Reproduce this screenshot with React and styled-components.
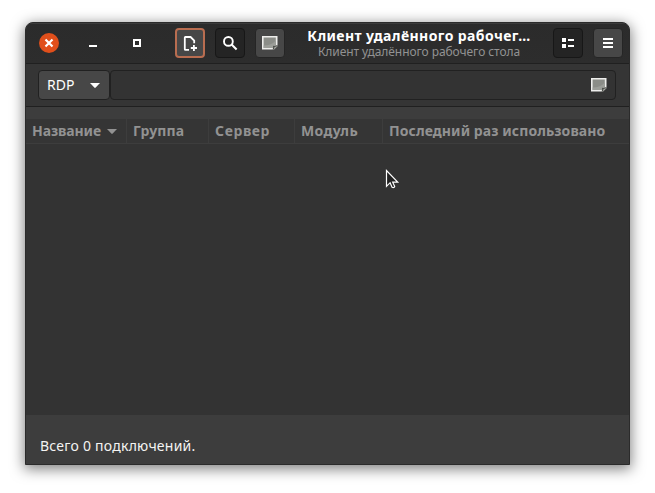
import React from "react";
import styled, { createGlobalStyle } from "styled-components";

const GlobalStyle = createGlobalStyle`
  * { box-sizing: border-box; }
  body { margin: 0; background: #fff; overflow: hidden; }
`;

const Desktop = styled.main`
  width: 655px;
  height: 493px;
  padding: 22px 25px 28px;
  background: #fff;
  font-family: "Noto Sans", sans-serif;
  font-size: 14px;
  color: #f4f4f2;
`;

const Window = styled.section`
  width: 605px;
  height: 443px;
  display: flex;
  flex-direction: column;
  border: 1px solid #2b2b2b;
  border-radius: 8px 8px 0 0;
  overflow: hidden;
  background: #3d3d3d;
  box-shadow: 0 3px 14px 1px rgba(0, 0, 0, 0.5);
`;

const HeaderBar = styled.header`
  height: 41px;
  flex: none;
  display: flex;
  align-items: center;
  padding: 0 6px 0 13px;
  background: linear-gradient(#2b2b2b, #2d2d2d);
  border-bottom: 1px solid #202020;
  box-shadow: inset 0 1px #3c3c3c;
`;

const WindowControls = styled.div`
  display: flex;
  gap: 24px;
  width: 136px;
`;

const Control = styled.button`
  width: 20px;
  height: 20px;
  padding: 0;
  border: 0;
  border-radius: 50%;
  background: ${(p) => (p.$close ? "#e04f1b" : "transparent")};
  svg { display: block; }
`;

const Actions = styled.div`
  display: flex;
  gap: 10px;
`;

const tones = {
  focus: "background:#474747;border:2px solid #b96d50;",
  flat: "background:#242424;border:1px solid #171717;",
  raised: "background:#474747;border:1px solid #252525;",
};

const IconButton = styled.button`
  width: 30px;
  height: 30px;
  padding: 0;
  display: flex;
  align-items: center;
  justify-content: center;
  border-radius: 4px;
  ${(p) => tones[p.$tone]}
  svg { display: block; flex: none; }
`;

const Titles = styled.div`
  flex: 1;
  display: flex;
  flex-direction: column;
  align-items: center;
  white-space: nowrap;
`;

const Title = styled.h1`
  margin: 0;
  font-size: 14px;
  line-height: 17px;
  font-weight: 700;
  letter-spacing: 0.4px;
  color: #fff;
`;

const Subtitle = styled.div`
  font-size: 12px;
  line-height: 15px;
  letter-spacing: -0.07px;
  color: #929292;
`;

const SearchBar = styled.div`
  height: 43px;
  flex: none;
  display: flex;
  padding: 6px 13px 6px 12px;
  background: #353535;
  border-bottom: 1px solid #202020;
`;

const Protocol = styled.button`
  width: 72px;
  height: 30px;
  padding: 0 9px 0 8px;
  display: flex;
  align-items: center;
  justify-content: space-between;
  border: 1px solid #212121;
  border-radius: 4px;
  background: #474747;
  color: #fff;
  font: inherit;
  font-size: 14px;
  span { padding-bottom: 2px; }
`;

const Entry = styled.div`
  flex: 1;
  height: 30px;
  display: flex;
  align-items: center;
  justify-content: flex-end;
  padding-right: 8px;
  border: 1px solid #212121;
  border-radius: 4px;
  background: #333;
`;

const List = styled.div`
  flex: none;
  height: 296px;
  margin-top: 12px;
  background: #333;
`;

const ListHeader = styled.div`
  height: 25px;
  display: grid;
  grid-template-columns: 101px 82px 86px 88px 1fr;
  border-bottom: 1px solid #3d3d3d;
  background: #353535;
`;

const Column = styled.div`
  display: flex;
  align-items: center;
  gap: 6px;
  padding-left: 6px;
  border-right: ${(p) => (p.$last ? "0" : "1px solid #3d3d3d")};
  color: #929292;
  font-weight: 700;
  line-height: 24px;
  white-space: nowrap;
  span { letter-spacing: ${(p) => p.$spacing}px; }
  svg { flex: none; }
`;

const Status = styled.footer`
  flex: 1;
  padding: 21px 14px 0;
  line-height: 20px;
  letter-spacing: 0.24px;
`;

const Pointer = styled.svg`
  position: absolute;
  left: 385px;
  top: 169px;
`;

const Arrow = ({ color }) => (
  <svg width="10" height="5" viewBox="0 0 10 5"><path d="M0 0h10L5.7 4.6q-.7.7-1.4 0z" fill={color} /></svg>
);

const Note = () => (
  <svg width="16" height="14" viewBox="0 0 16 14">
    <path d="M0 0h15.5v10L12 13.5H0z" fill="#eeeeec" />
    <path d="M1.6 1.6h12.2v7.6l-2.6 2.7H1.6z" fill="#8b8d88" />
    <path d="M1.6 9.5q8 0 12.2-5v4.7l-2.6 2.7H1.6z" fill="#9c9e99" />
    <path d="M10.6 13.5q.9-1.7.4-3.7 2.2.6 4.5-1.1v1.5L12 13.5z" fill="#4c4e4a" />
    <path d="M11.8 13.4l.8-2.3 3-1z" fill="#b4b6b0" />
  </svg>
);

const columns = [
  { label: "Название", sort: true, spacing: -0.1 },
  { label: "Группа", spacing: 0.12 },
  { label: "Сервер", spacing: 0.6 },
  { label: "Модуль", spacing: 0.35 },
  { label: "Последний раз использовано", spacing: 0.08 },
];

export default function App() {
  return (
    <Desktop>
      <GlobalStyle />
      <Window>
        <HeaderBar>
          <WindowControls>
            <Control $close aria-label="Закрыть">
              <svg width="20" height="20"><path d="M6.5 6.5l7 7M13.5 6.5l-7 7" stroke="#fff" strokeWidth="2.2" /></svg>
            </Control>
            <Control aria-label="Свернуть">
              <svg width="20" height="20"><path d="M6 12h8v2H6z" fill="#fff" /></svg>
            </Control>
            <Control aria-label="Развернуть">
              <svg width="20" height="20"><path d="M7 7h6v6H7z" fill="none" stroke="#fff" strokeWidth="2" /></svg>
            </Control>
          </WindowControls>
          <Actions>
            <IconButton $tone="focus" aria-label="Создать">
              <svg width="16" height="16" viewBox="0 0 16 16" fill="none" stroke="#fff" strokeWidth="1.8">
                <path d="M7 14.9H3.4q-.6 0-.6-.6V2.6q0-.6.6-.6h5.2l3.6 3.6v2.6M8.8 13h6.2M11.9 9.9v6.1" />
              </svg>
            </IconButton>
            <IconButton $tone="flat" aria-label="Поиск">
              <svg width="16" height="16" viewBox="0 0 16 16" fill="none" stroke="#fff" strokeWidth="1.9">
                <circle cx="6.4" cy="6.4" r="4.4" /><path d="M9.6 9.6l5 5" strokeWidth="2.1" />
              </svg>
            </IconButton>
            <IconButton $tone="raised" aria-label="Заметка"><Note /></IconButton>
          </Actions>
          <Titles>
            <Title>Клиент удалённого рабочег…</Title>
            <Subtitle>Клиент удалённого рабочего стола</Subtitle>
          </Titles>
          <Actions>
            <IconButton $tone="flat" aria-label="Вид">
              <svg width="12" height="10" fill="#fff"><path d="M0 0h4v4H0zM6 1h6v2H6zM0 6h4v4H0zM6 7h6v2H6z" /></svg>
            </IconButton>
            <IconButton $tone="raised" aria-label="Меню">
              <svg width="10" height="10" fill="#fff"><path d="M0 0h10v2H0zM0 4h10v2H0zM0 8h10v2H0z" /></svg>
            </IconButton>
          </Actions>
        </HeaderBar>
        <SearchBar>
          <Protocol><span>RDP</span><Arrow color="#fff" /></Protocol>
          <Entry><Note /></Entry>
        </SearchBar>
        <List>
          <ListHeader>
            {columns.map((c, i) => (
              <Column key={c.label} $spacing={c.spacing} $last={i === columns.length - 1}>
                <span>{c.label}</span>
                {c.sort && <Arrow color="#929292" />}
              </Column>
            ))}
          </ListHeader>
        </List>
        <Status>Всего 0 подключений.</Status>
      </Window>
      <Pointer width="15" height="21" viewBox="0 0 15 21">
        <path d="M1.5 1.5v15.8l3.6-3.6 2 4.5q1.8 1 2.6-.8l-2-4.2h5z" fill="#222" stroke="#fff" strokeWidth="1.2" />
      </Pointer>
    </Desktop>
  );
}
